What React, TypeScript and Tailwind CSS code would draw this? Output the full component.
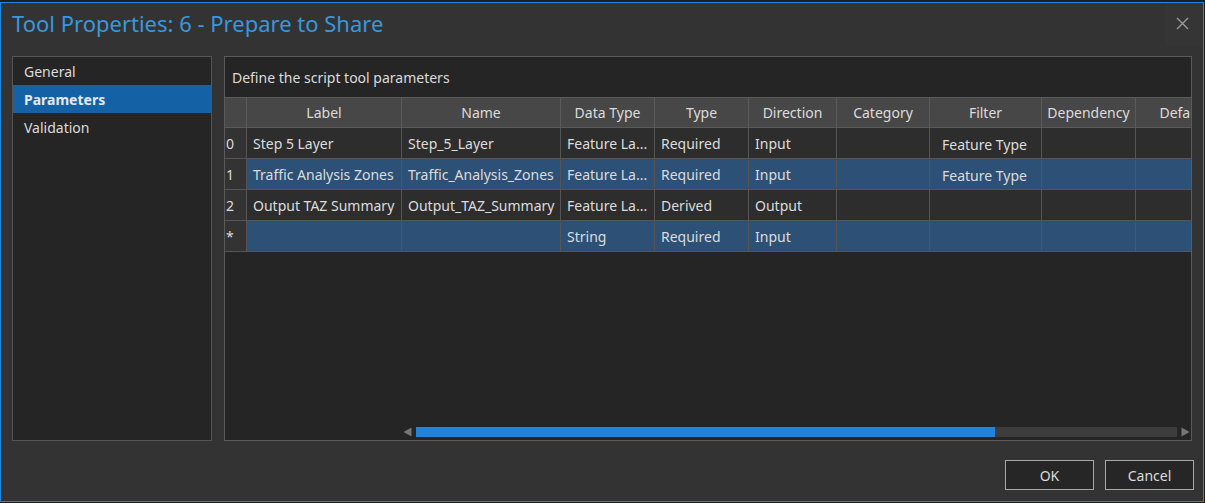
import React from 'react'

// ─── Tool Properties dialog ──────────────────────────────────────────────────

type Col = { key: string; title: string; width: string }

const columns: Col[] = [
  { key: 'label', title: 'Label', width: 'w-[155px]' },
  { key: 'name', title: 'Name', width: 'w-[159px]' },
  { key: 'dataType', title: 'Data Type', width: 'w-[94px]' },
  { key: 'type', title: 'Type', width: 'w-[94px]' },
  { key: 'direction', title: 'Direction', width: 'w-[88px]' },
  { key: 'category', title: 'Category', width: 'w-[93px]' },
  { key: 'filter', title: 'Filter', width: 'w-[112px]' },
  { key: 'dependency', title: 'Dependency', width: 'w-[94px]' },
  { key: 'default', title: 'Default', width: 'w-[96px]' },
]

type Row = { id: string; selected: boolean; cells: Record<string, string> }

const rows: Row[] = [
  {
    id: '0',
    selected: false,
    cells: {
      label: 'Step 5 Layer',
      name: 'Step_5_Layer',
      dataType: 'Feature La...',
      type: 'Required',
      direction: 'Input',
      filter: 'Feature Type',
    },
  },
  {
    id: '1',
    selected: true,
    cells: {
      label: 'Traffic Analysis Zones',
      name: 'Traffic_Analysis_Zones',
      dataType: 'Feature La...',
      type: 'Required',
      direction: 'Input',
      filter: 'Feature Type',
    },
  },
  {
    id: '2',
    selected: false,
    cells: {
      label: 'Output TAZ Summary',
      name: 'Output_TAZ_Summary',
      dataType: 'Feature La...',
      type: 'Derived',
      direction: 'Output',
    },
  },
  {
    id: '*',
    selected: true,
    cells: {
      dataType: 'String',
      type: 'Required',
      direction: 'Input',
    },
  },
]

export default function App() {
  return (
    <div
      className="w-[1205px] h-[503px] bg-[#1b1d20] pt-[2px] overflow-hidden text-[#dcdcdc]"
      style={{ fontFamily: '"Noto Sans", "Open Sans", sans-serif' }}
    >
      <div className="w-[1204px] h-[500px] border border-[#1e88e5] bg-[#333333] flex flex-col">
        {/* Title bar */}
        <div className="h-[53px] flex items-start shrink-0">
          <h1 className="pl-[11px] pt-[5px] text-[22px] leading-[31px] text-[#3897df]">
            Tool Properties: 6 - Prepare to Share
          </h1>
          <div className="ml-auto w-[38px] h-[43px] bg-[#353535] flex items-center justify-center">
            <svg width="13" height="13" viewBox="0 0 13 13" className="mr-[3px] mb-[2px]">
              <path d="M1 1 L12 12 M12 1 L1 12" stroke="#9c9c9c" strokeWidth="1.4" />
            </svg>
          </div>
        </div>

        {/* Body */}
        <div className="flex gap-[12px] pl-[11px] h-[385px] shrink-0">
          {/* Sidebar */}
          <div className="w-[200px] h-full border border-[#555555] bg-[#252525] flex flex-col text-[14px]">
            <SideItem label="General" />
            <SideItem label="Parameters" active />
            <SideItem label="Validation" />
          </div>

          {/* Parameters grid */}
          <div className="w-[968px] h-full border border-[#5a5a5a] bg-[#252525] flex flex-col overflow-hidden text-[14px]">
            <div className="h-[40px] shrink-0 flex items-center pl-[7px]">Define the script tool parameters</div>

            <div className="flex h-[31px] shrink-0 border-y border-[#5a5a5a] bg-[#474747] w-max">
              <div className="w-[22px] border-r border-[#5a5a5a]" />
              {columns.map((c) => (
                <div
                  key={c.key}
                  className={`${c.width} shrink-0 border-r border-[#5a5a5a] flex items-center justify-center`}
                >
                  {c.title}
                </div>
              ))}
            </div>

            {rows.map((r) => (
              <div key={r.id} className="flex h-[31px] shrink-0 border-b border-[#555555] w-max">
                <div className="w-[22px] shrink-0 border-r border-[#555555] bg-[#333333] flex items-center pl-[1px]">
                  {r.id}
                </div>
                {columns.map((c) => (
                  <div
                    key={c.key}
                    className={`${c.width} shrink-0 border-r border-[#555555] flex items-center whitespace-nowrap overflow-hidden ${
                      c.key === 'filter' ? 'pl-[12px] pt-[2px]' : 'pl-[6px]'
                    } ${r.selected ? 'bg-[#2d5076]' : 'bg-[#2d2d2d]'}`}
                  >
                    {r.cells[c.key] ?? ''}
                  </div>
                ))}
              </div>
            ))}

            {/* Horizontal scrollbar */}
            <div className="mt-auto mb-[3px] ml-[178px] h-[10px] flex items-center gap-[4px]">
              <svg width="9" height="10" viewBox="0 0 9 10">
                <path d="M0.5 5 L8.5 0.5 L8.5 9.5 Z" fill="#777777" />
              </svg>
              <div className="flex-1 h-[10px] bg-[#3d3d3d] flex">
                <div className="w-[579px] h-full bg-[#2283da]" />
              </div>
              <svg width="9" height="10" viewBox="0 0 9 10" className="mr-[1px]">
                <path d="M0.5 0.5 L8.5 5 L0.5 9.5 Z" fill="#777777" />
              </svg>
            </div>
          </div>
        </div>

        {/* Footer buttons */}
        <div className="flex justify-end gap-[11px] pr-[9px] pt-[19px]">
          <DialogButton label="OK" />
          <DialogButton label="Cancel" />
        </div>
      </div>
    </div>
  )
}

// ─── Sidebar item ─────────────────────────────────────────────────────────────

function SideItem({ label, active = false }: { label: string; active?: boolean }) {
  return (
    <div
      className={`h-[28px] flex items-center pl-[11px] ${
        active ? 'bg-[#1461a6] font-bold text-[#e8e8e8]' : ''
      }`}
    >
      {label}
    </div>
  )
}

// ─── Footer button ────────────────────────────────────────────────────────────

function DialogButton({ label }: { label: string }) {
  return (
    <button className="w-[89px] h-[30px] border border-[#a8a8a8] bg-[#262626] text-[14px] text-[#dcdcdc] flex items-center justify-center">
      {label}
    </button>
  )
}
